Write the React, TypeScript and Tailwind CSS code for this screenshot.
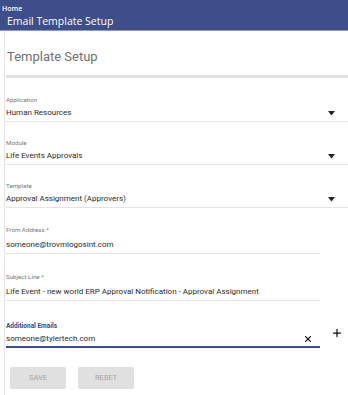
import { X, Plus } from "lucide-react";

interface FieldProps {
  label: string;
  value: string;
  required?: boolean;
  select?: boolean;
  className?: string;
}

const Caret = () => (
  <svg width="7" height="5" viewBox="0 0 7 5" className="shrink-0">
    <path d="M0 0 H7 L3.5 4.5 Z" fill="#222" />
  </svg>
);

// selects run full width, text inputs stop short and sit a little taller
const Field = ({ label, value, required, select, className }: FieldProps) => (
  <div className={`${select ? "w-full" : "w-[314px]"} ${className ?? ""}`}>
    <div className="h-[10px] text-[6.2px] leading-[10px] text-[#777]">
      {label}
      {required && <span> *</span>}
    </div>
    <div
      className={`flex items-center justify-between border-b border-[#e3e3e3] pr-[13px] ${
        select ? "h-[17px]" : "h-[19px] pt-[2px]"
      }`}
    >
      <span className="text-[8px] text-[#2b2b2b]">{value}</span>
      {select && <Caret />}
    </div>
  </div>
);

export default function App() {
  return (
    <div
      className="h-[395px] w-[348px] overflow-hidden bg-white"
      style={{ fontFamily: "Roboto, 'Liberation Sans', sans-serif" }}
    >
      {/* Header */}
      <div
        className="h-[31px] border-b border-[#8d98c4] bg-[#3d4e8b] text-white"
        style={{ fontFamily: "'Open Sans', 'Liberation Sans', sans-serif" }}
      >
        <div className="pl-[2px] pt-[4px] text-[7px] font-semibold leading-[9px]">Home</div>
        <div className="pl-[7px] pt-[1px] text-[10.5px] leading-[15px]">Email Template Setup</div>
      </div>

      <div className="ml-[4px] h-full border-l border-[#e6e6e6]">
        <div className="pl-[1px] pt-[16px]">
          <h1 className="h-[28px] pl-[1px] text-[13px] leading-[20px] text-[#707070]">Template Setup</h1>
          <div className="h-[3px] bg-[#e2e2e2]" />
        </div>

        <div className="flex flex-col pl-[1px] pt-[17px]">
          <Field label="Application" value="Human Resources" select />
          <Field label="Module" value="Life Events Approvals" select className="mt-[16px]" />
          <Field label="Template" value="Approval Assignment (Approvers)" select className="mt-[16px]" />
          <Field label="From Address" value="someone@trovmlogosint.com" required className="mt-[17px]" />
          <Field
            label="Subject Line"
            value="Life Event - new world ERP Approval Notification - Approval Assignment"
            required
            className="mt-[18px]"
          />
          <div className="mt-[20px] flex items-start">
            <div className="w-[314px]">
              <div className="h-[10px] text-[6.5px] font-bold leading-[10px] text-[#2f4a8f]">
                Additional Emails
              </div>
              <div className="flex h-[17px] items-center justify-between border-b-2 border-[#3d4e8b] pr-[7px]">
                <span className="text-[8px] text-[#2b2b2b]">someone@tylertech.com</span>
                <X size={10} strokeWidth={2.75} color="#222" />
              </div>
            </div>
            <Plus size={12} strokeWidth={2.5} color="#111" className="ml-[11px] mt-[6px]" />
          </div>
        </div>

        <div className="flex gap-[12px] pl-[5px] pt-[19px]">
          <button className="h-[22px] w-[56px] rounded-[2px] bg-[#e0e0e0] text-[7.5px] text-[#a3a3a3]">
            SAVE
          </button>
          <button className="h-[22px] w-[56px] rounded-[2px] bg-[#e0e0e0] text-[7.5px] text-[#a3a3a3]">
            RESET
          </button>
        </div>
      </div>
    </div>
  );
}
